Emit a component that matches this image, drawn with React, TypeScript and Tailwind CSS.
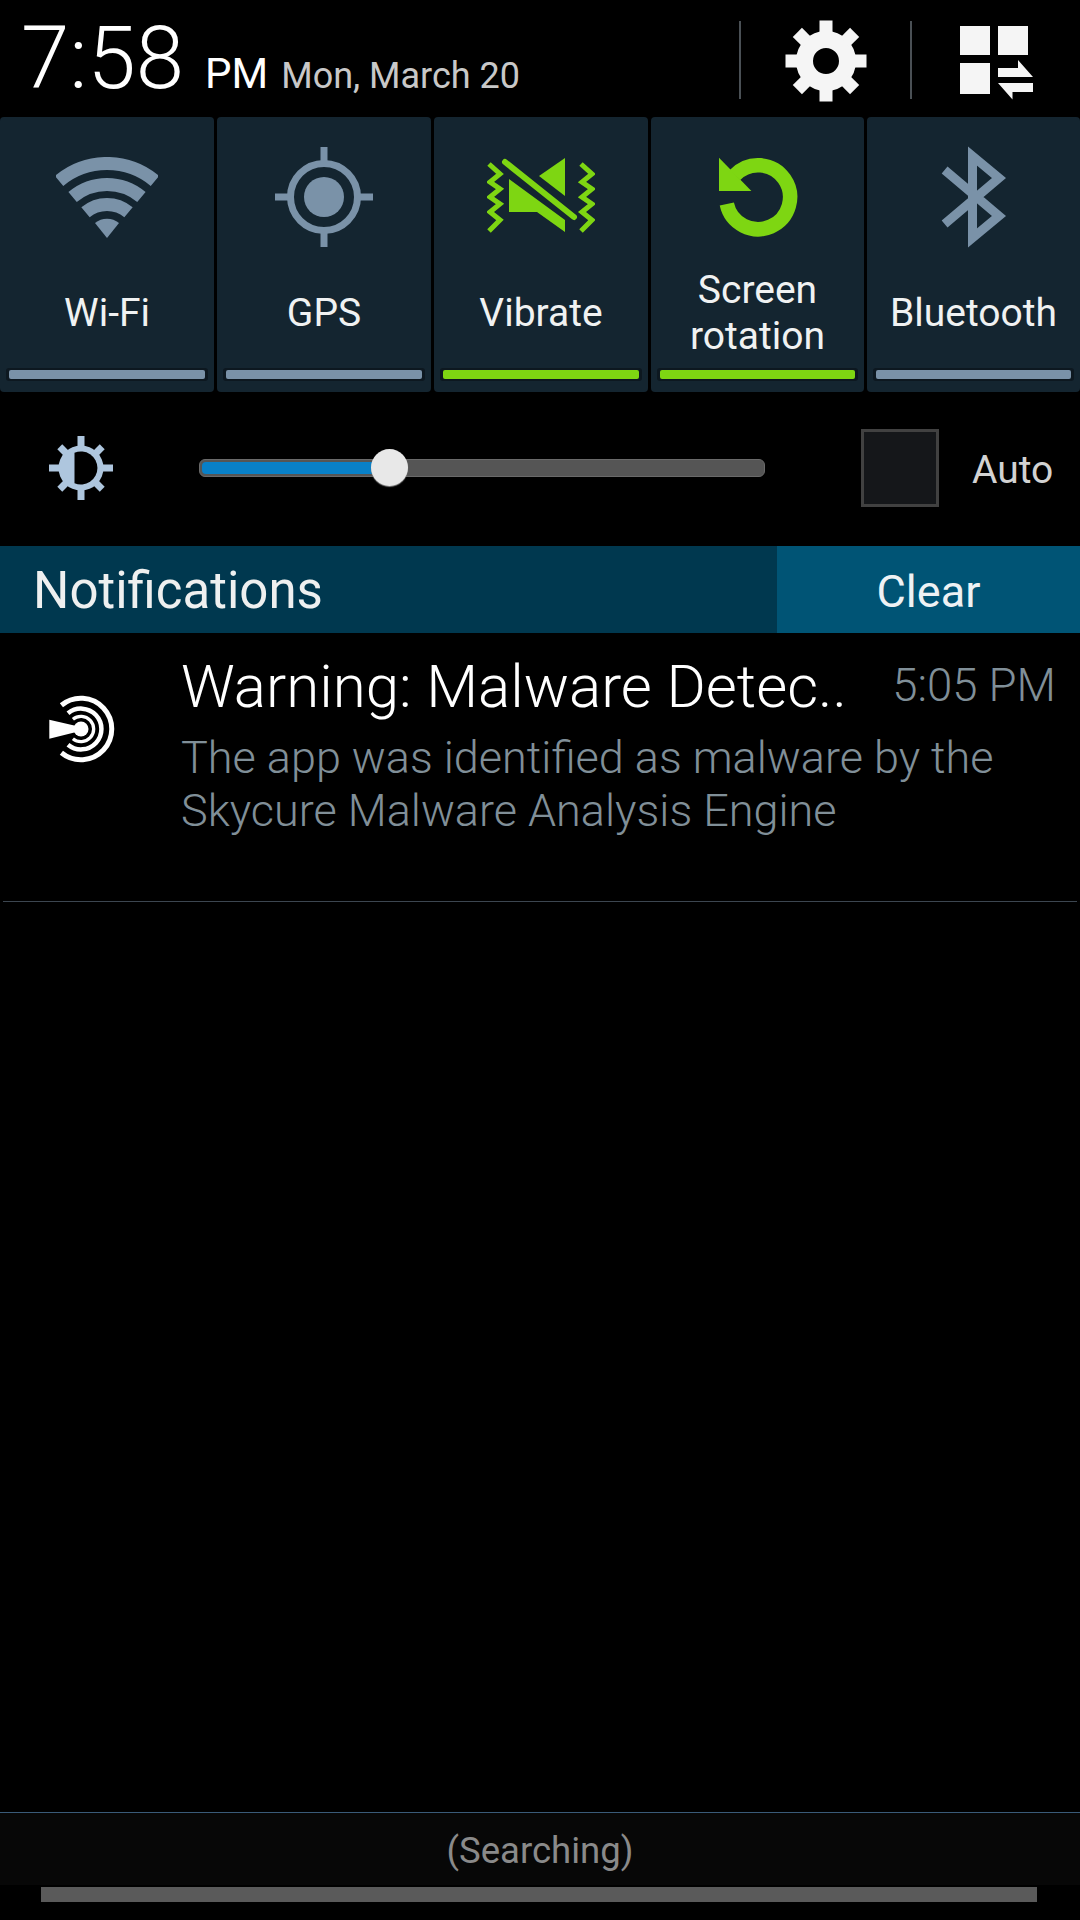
import type { ReactNode } from 'react';

// Quick setting tile data
const GREY = '#7a92a8';
const GREEN = '#7ed612';

function WifiIcon() {
  return (
    <svg width="102" height="81" viewBox="0 0 102 81" fill="none" stroke={GREY} strokeWidth="13">
      <path d="M3.1 23.9A74.5 74.5 0 0 1 98.9 23.9" />
      <path d="M16.6 40A53.5 53.5 0 0 1 85.4 40" />
      <path d="M29.5 55.3A33.5 33.5 0 0 1 72.5 55.3" />
      <path d="M51 81L39 66A19 19 0 0 1 63 66Z" fill={GREY} stroke="none" />
    </svg>
  );
}

function GpsIcon() {
  return (
    <svg width="98" height="100" viewBox="0 0 98 100" fill="none" stroke={GREY}>
      <circle cx="49" cy="50" r="33.5" strokeWidth="7" />
      <circle cx="49" cy="50" r="20" fill={GREY} stroke="none" />
      <path d="M49 0V14M49 86V100M0 50H13M85 50H98" strokeWidth="7" />
    </svg>
  );
}

function VibrateIcon() {
  return (
    <svg width="108" height="80" viewBox="28 28 108 80" fill="none" stroke={GREEN}>
      <path d="M30 35L41 45L31 53L41 60L31 68L41 75L31 83L41 91L30 102" strokeWidth="5" />
      <path d="M122 35L133 45L123 53L133 60L123 68L133 75L123 83L133 91L122 102" strokeWidth="5" />
      <path d="M46 33L115 88" strokeWidth="6" strokeLinecap="round" />
      <path d="M106 29L80 47L106 67Z" fill={GREEN} stroke="none" />
      <path d="M50 50L106 91V103L78 83H50Z" fill={GREEN} stroke="none" />
    </svg>
  );
}

function RotationIcon() {
  return (
    <svg width="84" height="84" viewBox="716 155 84 84" fill="none" stroke={GREEN}>
      <path d="M726.8 204A32 32 0 1 0 735 175" strokeWidth="14.5" />
      <path d="M719 157.7V191H751.4Z" fill={GREEN} stroke="none" />
    </svg>
  );
}

function BluetoothIcon() {
  return (
    <svg width="66" height="102" viewBox="941 146 66 102" fill="none" stroke={GREY} strokeWidth="9" strokeMiterlimit="8">
      <path d="M944.6 170L999 216L972.5 238V156L999 178L944.6 224" />
    </svg>
  );
}

function GearIcon() {
  const angles = [0, 45, 90, 135, 180, 225, 270, 315];
  return (
    <svg width="82" height="82" viewBox="-41 -41 82 82" fill="none">
      <circle r="21.5" stroke="#f5f5f5" strokeWidth="17" />
      {angles.map((a) => (
        <rect key={a} x="-6.5" y="-40.5" width="13" height="14" fill="#f5f5f5" transform={`rotate(${a})`} />
      ))}
    </svg>
  );
}

function QuickPanelIcon() {
  return (
    <svg width="74" height="80" viewBox="959 20 74 80" fill="#f5f5f5">
      <rect x="960" y="26" width="30" height="29" />
      <rect x="998" y="26" width="30" height="29" />
      <rect x="960" y="63" width="30" height="31" />
      <path d="M998 68H1018V60L1033 77H998Z" />
      <path d="M998 83H1033V92H1012.5V99.5Z" />
    </svg>
  );
}

function BrightnessIcon() {
  const angles = [0, 45, 90, 135, 180, 225, 270, 315];
  return (
    <svg width="64" height="64" viewBox="-32 -32 64 64" fill="#aec6de">
      <circle r="22.5" />
      {angles.map((a) => (
        <rect key={a} x="-3.5" y={a % 90 === 0 ? -32 : -30} width="7" height="14" transform={`rotate(${a})`} />
      ))}
      <path d="M-6.5 -15.2A16.5 16.5 0 1 1 -6.5 15.2Z" fill="#000" />
    </svg>
  );
}

function RadarIcon() {
  return (
    <svg width="68" height="68" viewBox="-33 -34 68 68" fill="none" stroke="#fff">
      <path d="M-19.6 -23.8A30.8 30.8 0 1 1 -19.6 23.8" strokeWidth="5" />
      <path d="M-13 -15.7A20.4 20.4 0 1 1 -13 15.7" strokeWidth="4.5" />
      <path d="M-8.1 -9.8A12.7 12.7 0 1 1 -8.1 9.8" strokeWidth="3.3" />
      <circle r="7.5" fill="#fff" stroke="none" />
      <path d="M-31.7 -9.3L-5.7 -3.3V3.3L-31.7 9.7Z" fill="#fff" stroke="none" />
    </svg>
  );
}

interface TileProps {
  icon: ReactNode;
  label: ReactNode;
  active?: boolean;
  narrow?: boolean;
}

function Tile({ icon, label, active = false, narrow = false }: TileProps) {
  return (
    <div className={`flex h-full flex-col rounded-[4px] bg-[#142530] ${narrow ? 'w-[213px]' : 'w-[214px]'}`}>
      <div className="mt-[30px] flex h-[100px] items-center justify-center">{icon}</div>
      <div className="flex h-[121px] items-center justify-center pt-[10px] text-center text-[39px] leading-[46px] text-[#f0f2f2]">
        {label}
      </div>
      <div className="mx-[6px] flex h-[13px] items-start rounded-[3px] bg-[#0d1820] px-[3px] pt-[2px]">
        <div className={`h-[9px] w-full rounded-[2px] ${active ? 'bg-[#7ed612]' : 'bg-[#7a92a8]'}`} />
      </div>
    </div>
  );
}

export default function App() {
  return (
    <div className="flex h-[1920px] w-[1080px] flex-col overflow-hidden bg-black font-['Roboto',sans-serif]">
      {/* status header */}
      <div className="flex h-[117px] items-center">
        <div className="ml-[21px] flex w-[718px] items-baseline">
          <span className="text-[87px] leading-[117px] font-light text-white">7:58</span>
          <span className="ml-[21px] text-[42px] text-white">PM</span>
          <span className="ml-[13px] text-[36px] text-[#c8c8c8]">Mon, March 20</span>
        </div>
        <div className="mb-[-3px] h-[78px] w-[2px] bg-[#4a5055]" />
        <div className="flex w-[169px] items-center justify-center pt-[5px]">
          <GearIcon />
        </div>
        <div className="mb-[-3px] h-[78px] w-[2px] bg-[#4a5055]" />
        <div className="flex flex-1 items-center justify-center pt-[3px]">
          <QuickPanelIcon />
        </div>
      </div>

      {/* quick settings */}
      <div className="flex h-[275px] gap-[3px]">
        <Tile icon={<WifiIcon />} label="Wi-Fi" />
        <Tile icon={<GpsIcon />} label="GPS" />
        <Tile icon={<VibrateIcon />} label="Vibrate" active />
        <Tile
          icon={<RotationIcon />}
          label={
            <span>
              Screen
              <br />
              rotation
            </span>
          }
          active
          narrow
        />
        <Tile icon={<BluetoothIcon />} label="Bluetooth" narrow />
      </div>

      {/* brightness */}
      <div className="flex h-[154px] items-center pb-[2px]">
        <div className="ml-[49px] flex h-[64px] w-[64px]">
          <BrightnessIcon />
        </div>
        <div className="relative ml-[86px] h-[18px] w-[566px] rounded-[6px] border border-[#6a6a6a] bg-[#555555]">
          <div className="mt-[2px] ml-[2px] h-[12px] w-[188px] rounded-l-[4px] bg-[#0880c8]" />
          <div className="absolute top-[-11px] left-[171px] h-[37px] w-[37px] rounded-full bg-[#e8e8e8] shadow-[0_1px_1px_#888]" />
        </div>
        <div className="ml-[96px] h-[78px] w-[78px] border-[3px] border-[#414141] bg-[#15171a]" />
        <span className="mt-[4px] ml-[33px] text-[39px] text-[#d2d2d2]">Auto</span>
      </div>

      {/* notifications header */}
      <div className="flex h-[87px] bg-[#00384f]">
        <div className="flex flex-1 items-center pt-[4px] pl-[33px] text-[51px] text-[#eef0f0]">Notifications</div>
        <div className="flex w-[303px] items-center justify-center bg-[#005475] pt-[4px] text-[45px] text-[#eef2f4]">Clear</div>
      </div>

      {/* notification row */}
      <div className="flex h-[268px]">
        <div className="mt-[62px] ml-[48px]">
          <RadarIcon />
        </div>
        <div className="ml-[65px] flex-1 pr-[24px]">
          <div className="mt-[19px] flex items-start justify-between">
            <span className="text-[60px] leading-[70px] font-light text-white">Warning: Malware Detec..</span>
            <span className="mt-[9px] text-[45.5px] leading-[50px] font-light text-[#808f98]">5:05 PM</span>
          </div>
          <p className="mt-[9px] text-[45px] leading-[53px] font-light text-[#808f98]">
            The app was identified as malware by the
            <br />
            Skycure Malware Analysis Engine
          </p>
        </div>
      </div>
      <div className="mx-[3px] h-[1px] bg-[#3c4650]" />

      <div className="flex-1" />

      {/* carrier bar */}
      <div className="h-[1px] bg-[#3a5a78]" />
      <div className="flex h-[72px] items-center justify-center bg-[#070707] pt-[4px] text-[36.5px] text-[#8a8a8a]">(Searching)</div>
      <div className="mt-[2px] mb-[18px] ml-[41px] h-[15px] w-[996px] bg-[#5a5a5a]" />
    </div>
  );
}
